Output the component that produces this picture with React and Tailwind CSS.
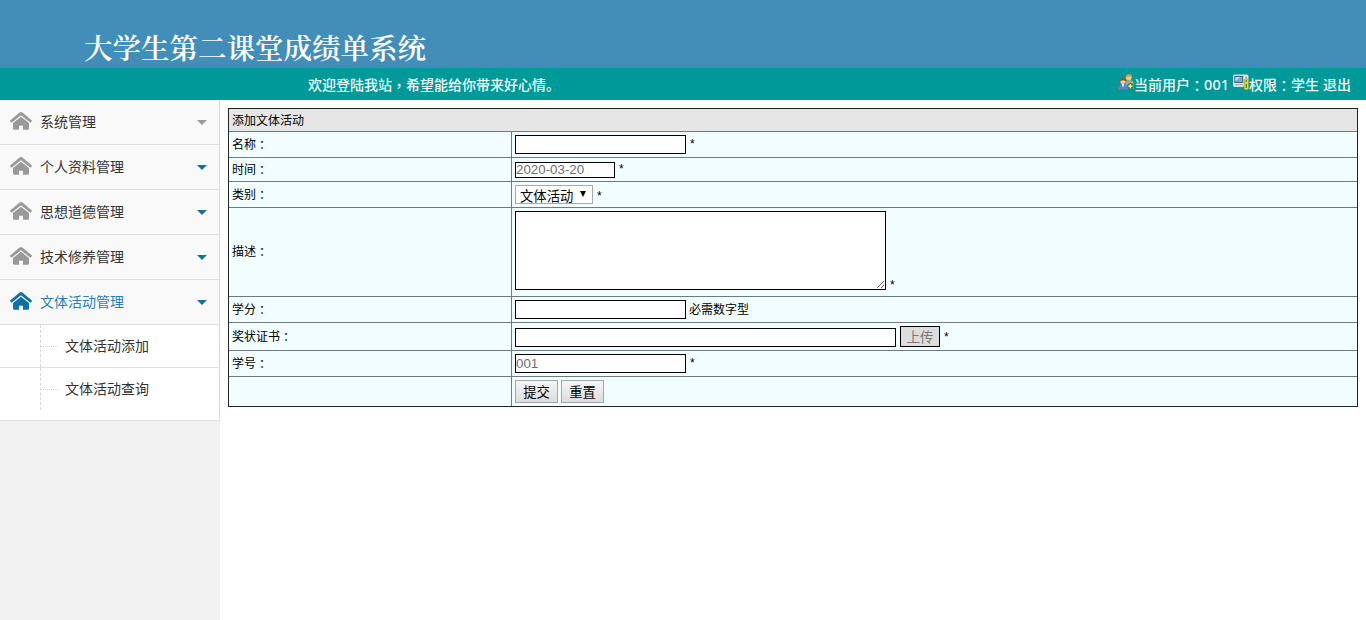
const SANS = "font-['Liberation_Sans','Noto_Sans_CJK_SC',sans-serif]"

const MENU = [
  { label: '系统管理', arrow: 'text-[#999999]' },
  { label: '个人资料管理', arrow: 'text-[#1170a6]' },
  { label: '思想道德管理', arrow: 'text-[#1170a6]' },
  { label: '技术修养管理', arrow: 'text-[#1170a6]' },
  { label: '文体活动管理', arrow: 'text-[#1170a6]', active: true },
]

const FIELD = 'block shrink-0 border border-black bg-white outline-none'

// full-width colon and comma, centred in their cell
function Mark({ children }) {
  return <span className="inline-block translate-y-[1px] leading-none font-['Noto_Sans_CJK_TC',sans-serif]">{children}</span>
}

function HomeIcon({ className }) {
  return (
    <svg viewBox="0 0 22 18" className={className} fill="currentColor" aria-hidden="true">
      <path d="M9.6.6Q11-.5 12.4.6L21.6 8.2Q22.2 8.8 21.7 9.4L21 10.2Q20.4 10.7 19.8 10.2L11 3.3 2.2 10.2Q1.6 10.7 1 10.2L.3 9.4Q-.2 8.8.4 8.2Z" />
      <path d="M11 4.8 19 11.1V16.6Q19 17.8 17.8 17.8H13V13.8H9V17.8H4.2Q3 17.8 3 16.6V11.1Z" />
    </svg>
  )
}

function Caret({ className }) {
  return (
    <svg viewBox="0 0 10 5" className={className} fill="currentColor" aria-hidden="true">
      <path d="M0 0H10L5 5Z" />
    </svg>
  )
}

function UsersIcon() {
  return (
    <svg viewBox="0 0 16 16" className="h-4 w-4 shrink-0" aria-hidden="true">
      <circle cx="10.8" cy="3.4" r="2.9" fill="#f5c58b" />
      <path d="M7.7 3.6Q7.6.2 10.8.2T14 3.4L10.8 2.3Z" fill="#e39a2d" />
      <path d="M7.8 14V8Q8 6 10.9 6 15.4 6 15.6 9V15H9Z" fill="#a3b072" />
      <circle cx="5" cy="7.2" r="2.7" fill="#f6c9a4" />
      <path d="M2 7.4Q1.8 4 5 4 8.2 4 8 7.4L5 6Z" fill="#a24b32" />
      <path d="M.3 15.6 1.4 11.6Q2.3 10 5 10 8 10 8.7 11.6L9.6 15.6Z" fill="#4c8bdc" />
      <path d="M3.8 10H6.2L5 13.4Z" fill="#fff" />
      <path d="M.8 12.4 2.6 13 2 15.6H.2Z" fill="#e8574b" />
      <circle cx="12.4" cy="12.2" r="3.3" fill="#438c2d" />
      <path d="M11.8 10.2H13V11.6H14.4V12.8H13V14.2H11.8V12.8H10.4V11.6H11.8Z" fill="#fff" />
    </svg>
  )
}

function AccessIcon() {
  return (
    <svg viewBox="0 0 16 16" className="h-4 w-4 shrink-0" aria-hidden="true">
      <rect x=".5" y="1" width="14.5" height="11.5" rx=".8" fill="#f4f2e8" stroke="#d1dce0" />
      <rect x="1.8" y="2.4" width="8" height="6" fill="#6fabdd" stroke="#365f8e" />
      <path d="M2.3 3H7.5L2.3 7.6Z" fill="#b4d9f3" />
      <path d="M2 10.7H10" stroke="#8b9b9e" />
      <path d="M12 3.2H14" stroke="#777" />
      <rect x="11.2" y="4.8" width="4.3" height="11" rx="1.4" fill="#d8e63a" stroke="#829b25" strokeWidth=".7" />
      <path d="M13.3 6V8M13.3 9.8V14" stroke="#4d7724" strokeWidth="1.2" />
    </svg>
  )
}

function Header() {
  return (
    <header>
      <div className="flex h-[68px] items-end bg-[#438eb9] pl-[84px]">
        <h1 className="h-[38px] text-[28.5px] leading-[40px] font-semibold text-white font-['Liberation_Serif','Noto_Serif_CJK_SC','Noto_Sans_CJK_SC',serif]">
          大学生第二课堂成绩单系统
        </h1>
      </div>
      <div className="flex h-8 justify-between bg-[#009999] pr-[15px] pl-[308px] text-[14px] leading-[34px] font-medium whitespace-nowrap text-[#effafa]">
        <p>欢迎登陆我站<Mark>，</Mark>希望能给你带来好心情。</p>
        <div className="flex">
          <span className="flex">
            <span className="pt-[6px]"><UsersIcon /></span>
            <span>当前用户<Mark>：</Mark><span className="text-[14.5px] leading-none font-['Noto_Sans']">001</span></span>
          </span>
          <span className="ml-[4px] flex">
            <span className="pt-[6px]"><AccessIcon /></span>
            <span>权限<Mark>：</Mark>学生</span>
          </span>
          <a href="#" className="ml-[4px]">退出</a>
        </div>
      </div>
    </header>
  )
}

function Sidebar() {
  return (
    <aside className="w-[220px] shrink-0 bg-[#f2f2f2] text-[14px] text-[#333]">
      <nav className="border-r border-[#dcdcdc]">
        {MENU.map((item) => (
          <a
            key={item.label}
            href="#"
            className={`flex h-[45px] items-center border-b border-[#dfdfdf] bg-[#f9f9f9] pr-[12px] pl-[10px] ${item.active ? 'text-[#2b7dbc]' : ''}`}
          >
            <HomeIcon className={`mb-[2px] h-[18px] w-[22px] ${item.active ? 'text-[#1170a6]' : 'text-[#999999]'}`} />
            <span className="ml-2 leading-5">{item.label}</span>
            <Caret className={`ml-auto h-[5px] w-[10px] ${item.arrow}`} />
          </a>
        ))}
        <ul className="h-[96px] border-b border-[#dfdfdf] bg-white">
          <li className="flex h-[43px] items-stretch border-b border-[#dfdfdf]">
            <Branch />
            <a href="#" className="ml-[7px] leading-[42px]">文体活动添加</a>
          </li>
          <li className="flex h-[42px] items-stretch">
            <Branch />
            <a href="#" className="ml-[7px] leading-[42px]">文体活动查询</a>
          </li>
        </ul>
      </nav>
    </aside>
  )
}

function Branch() {
  return (
    <span className="ml-10 flex w-[18px] flex-col border-l border-dashed border-[#d4d9dc]">
      <span className="h-[22px] border-b border-dotted border-[#cfd6da]" />
    </span>
  )
}

function Row({ label, height, last, children }) {
  return (
    <div className={`flex ${height} ${last ? '' : 'border-b border-[#70797b]'}`}>
      <div className="flex w-[283px] shrink-0 items-center border-r border-[#70797b] pl-[3px]">
        {label && <span className="leading-4">{label}<Mark>：</Mark></span>}
      </div>
      <div className="flex flex-1 items-start pt-[3px] pl-[3px]">{children}</div>
    </div>
  )
}

function Star({ className = '' }) {
  return <span className={`ml-[4px] leading-[18px] ${className}`}>*</span>
}

function ActivityForm() {
  return (
    <form className="border border-[#202424] bg-[#f1fdff] text-[12px] text-black">
      <div className="h-[23px] border-b border-[#70797b] bg-[#e6e6e6] pl-[3px] leading-[24px]">添加文体活动</div>
      <Row label="名称" height="h-[26px]">
        <input className={`${FIELD} h-[19px] w-[171px]`} />
        <Star />
      </Row>
      <Row label="时间" height="h-[24px]">
        <input readOnly value="2020-03-20" className={`${FIELD} mt-px h-[16px] w-[100px] pb-px text-[13.33px] leading-[13px] text-[#6d6d6d]`} />
        <Star className="-mt-px" />
      </Row>
      <Row label="类别" height="h-[26px]">
        <div className="flex h-[19px] w-[78px] border border-[#a9a9a9] bg-white pl-[4px] text-[13.33px] leading-[21px]">
          <span>文体活动</span>
          <svg viewBox="0 0 6 6" className="mt-[5px] ml-[7px] h-[6px] w-[6px]" aria-hidden="true">
            <path d="M0 0H6L3 6Z" />
          </svg>
        </div>
        <Star className="mt-[2px]" />
      </Row>
      <Row label="描述" height="h-[89px]">
        <textarea className={`${FIELD} h-[79px] w-[371px] resize`} />
        <Star className="mt-[65px]" />
      </Row>
      <Row label="学分" height="h-[26px]">
        <input className={`${FIELD} h-[19px] w-[171px]`} />
        <span className="ml-[3px] leading-[20px]">必需数字型</span>
      </Row>
      <Row label="奖状证书" height="h-[28px]">
        <input className={`${FIELD} mt-[2px] h-[19px] w-[381px]`} />
        <button type="button" className="ml-[4px] h-[21px] w-[40px] border border-black bg-[#dddddd] pt-px text-[13.33px] leading-[19px] text-[#777]">上传</button>
        <Star className="mt-[2px]" />
      </Row>
      <Row label="学号" height="h-[26px]">
        <input readOnly value="001" className={`${FIELD} h-[19px] w-[171px] pb-px text-[13.33px] leading-[16px] text-[#6d6d6d]`} />
        <Star />
      </Row>
      <Row height="h-[29px]" last>
        <button type="button" className="h-[23px] w-[43px] border border-[#a2a8aa] bg-linear-to-b from-[#f5f5f5] to-[#dddddd] pt-px text-[13.33px] leading-[22px]">提交</button>
        <button type="button" className="ml-[3px] h-[23px] w-[43px] border border-[#a2a8aa] bg-linear-to-b from-[#f5f5f5] to-[#dddddd] pt-px text-[13.33px] leading-[22px]">重置</button>
      </Row>
    </form>
  )
}

export default function App() {
  return (
    <div className={`flex h-[620px] w-[1366px] flex-col overflow-hidden bg-white ${SANS}`}>
      <Header />
      <div className="flex flex-1">
        <Sidebar />
        <main className="flex-1 pt-2 pr-2 pl-2">
          <ActivityForm />
        </main>
      </div>
    </div>
  )
}
